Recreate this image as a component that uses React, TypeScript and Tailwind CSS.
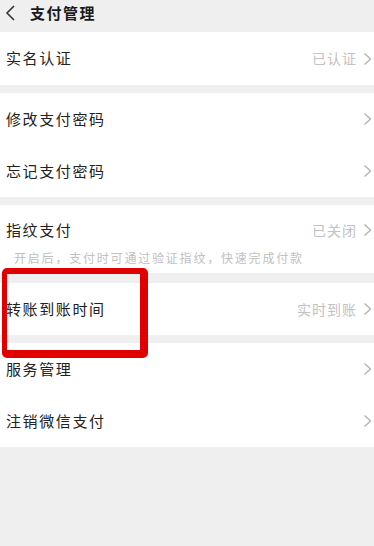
import React from "react";

const font = { fontFamily: '"Noto Sans CJK SC", "Noto Sans", sans-serif' };

function Chevron() {
  return (
    <svg width="9" height="14" viewBox="0 0 9 14" className="shrink-0">
      <path d="M1.5 1.5 L7.5 7 L1.5 12.5" fill="none" stroke="#b4b4b4" strokeWidth="1.4" />
    </svg>
  );
}

function Row({ label, value, h = "h-[52px]" }: { label: string; value?: string; h?: string }) {
  return (
    <div className={`flex items-center ${h} pl-[6px] pr-[2px]`}>
      <span className="text-[15px] tracking-[1.6px] text-[#222]">{label}</span>
      <div className="ml-auto flex items-center gap-[6px]">
        {value && <span className="text-[14px] tracking-[1px] text-[#c2c2c2]">{value}</span>}
        <Chevron />
      </div>
    </div>
  );
}

export default function App() {
  return (
    <div className="relative w-[374px] h-[546px] bg-[#efefef] overflow-hidden" style={font}>
      <div className="flex items-start h-[32px] pt-[1px]">
        <svg width="14" height="20" viewBox="0 0 14 20" className="ml-[4px] mt-[2px]">
          <path d="M10 3 L3 10 L10 17" fill="none" stroke="#333" strokeWidth="1.6" />
        </svg>
        <span className="ml-[12px] text-[15px] font-bold tracking-[1.5px] text-[#1a1a1a] leading-[24px]">支付管理</span>
      </div>
      <div className="bg-white h-[53px]">
        <Row label="实名认证" value="已认证" h="h-[53px]" />
      </div>
      <div className="bg-white mt-[8px]">
        <Row label="修改支付密码" />
        <Row label="忘记支付密码" />
      </div>
      <div className="bg-white mt-[8px] h-[68px] flex flex-col">
        <div className="flex items-center h-[46px] pl-[6px] pr-[2px] pt-[4px]">
          <span className="text-[15px] tracking-[1.6px] text-[#222]">指纹支付</span>
          <div className="ml-auto flex items-center gap-[6px]">
            <span className="text-[14px] tracking-[1px] text-[#c2c2c2]">已关闭</span>
            <Chevron />
          </div>
        </div>
        <div className="pl-[14px] text-[12px] tracking-[1.8px] text-[#c0c0c0] leading-[14px]">开启后，支付时可通过验证指纹，快速完成付款</div>
      </div>
      <div className="bg-white mt-[10px]">
        <Row label="转账到账时间" value="实时到账" />
      </div>
      <div className="bg-white mt-[8px]">
        <Row label="服务管理" />
        <Row label="注销微信支付" />
      </div>
      <div className="absolute left-[2px] top-[268px] w-[146px] h-[90px] border-[#e00000] border-l-[5px] border-t-[6px] border-r-[8px] border-b-[8px] rounded-[5px]" />
    </div>
  );
}
